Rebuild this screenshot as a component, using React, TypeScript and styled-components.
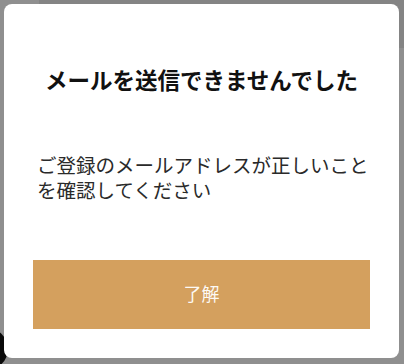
import React from "react";
import styled, { createGlobalStyle } from "styled-components";

const GlobalStyle = createGlobalStyle`
  html, body {
    margin: 0;
    padding: 0;
    background: #ffffff;
    font-family: "Noto Sans CJK JP", "Noto Sans", sans-serif;
  }
  * { box-sizing: border-box; }
`;

// the page that sits behind the dialog
const Page = styled.div`
  position: relative;
  width: 404px;
  height: 364px;
  overflow: hidden;
  background: #ffffff;
`;

const Header = styled.div`
  display: flex;
  height: 48px;
`;

const HeaderSide = styled.div<{ $tone: string; $w?: number }>`
  background: ${(p) => p.$tone};
  width: ${(p) => (p.$w ? `${p.$w}px` : "auto")};
  flex: ${(p) => (p.$w ? "none" : 1)};
`;

const ChatBubble = styled.div`
  position: absolute;
  left: -34px;
  bottom: -6px;
  width: 42px;
  height: 42px;
  border-radius: 50%;
  background: #111;
`;

const Overlay = styled.div`
  position: fixed;
  inset: 0;
  background: rgba(0, 0, 0, 0.44);
  display: flex;
  padding: 4px 5px 6px 4px;
`;

const Dialog = styled.div`
  flex: 1;
  background: #ffffff;
  border-radius: 8px;
  display: flex;
  flex-direction: column;
  padding: 60px 29px 29px 29px;
`;

const Title = styled.h2`
  margin: 0;
  font-size: 22.5px;
  line-height: 30px;
  font-weight: 700;
  color: #111;
  text-align: center;
  white-space: nowrap;
`;

const Message = styled.p`
  margin: 59px 0 0 0;
  padding-left: 4px;
  font-size: 19.5px;
  line-height: 24.5px;
  color: #2a2a2a;
`;

const ConfirmButton = styled.button`
  margin-top: auto;
  height: 69px;
  padding: 0 0 3px 0;
  border: none;
  border-radius: 0;
  background: #d4a05e;
  color: rgba(255, 255, 255, 0.95);
  font-family: "Noto Sans CJK JP", "Noto Sans", sans-serif;
  font-size: 18px;
  cursor: pointer;
`;

const App = () => {
  return (
    <>
      <GlobalStyle />
      <Page>
        <Header>
          <HeaderSide $tone="#ffffff" $w={39} />
          <HeaderSide $tone="#ececec" />
        </Header>
        <ChatBubble />
      </Page>
      <Overlay>
        <Dialog role="dialog">
          <Title>メールを送信できませんでした</Title>
          <Message>
            ご登録のメールアドレスが正しいことを確認してください
          </Message>
          <ConfirmButton>了解</ConfirmButton>
        </Dialog>
      </Overlay>
    </>
  );
};

export default App;
